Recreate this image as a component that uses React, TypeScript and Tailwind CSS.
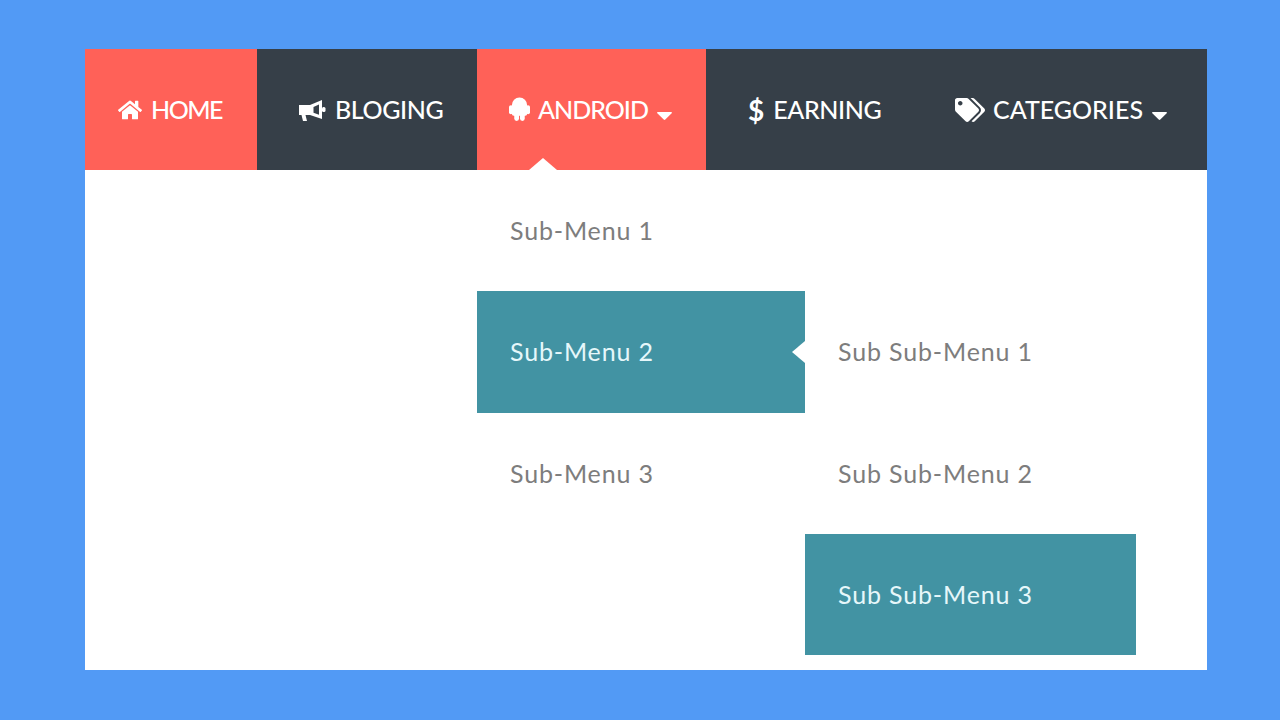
import { FaHome, FaTags } from 'react-icons/fa';

function AndroidIcon() {
  return (
    <svg viewBox="0 0 22 25" className="w-[21px] h-[25px] fill-white">
      <circle cx="11" cy="8" r="8" />
      <rect x="3" y="8" width="16" height="11" rx="2" />
      <rect x="0" y="8" width="4" height="9.5" rx="2" />
      <rect x="18" y="8" width="4" height="9.5" rx="2" />
      <rect x="5.5" y="16" width="5" height="8.5" rx="2.5" />
      <rect x="11.5" y="16" width="5" height="8.5" rx="2.5" />
    </svg>
  );
}

function HornIcon() {
  return (
    <svg viewBox="0 0 28 24" className="w-[28px] h-[24px]">
      <path d="M1 7h11v10H7.5l1.5 6H5L3.5 17H1z" fill="white" />
      <path d="M12 7 L24 2 V21 L12 17 Z" fill="white" />
      <path d="M15.5 9 L21 6.6 V16.8 L15.5 14.8 Z" fill="#363f48" />
      <rect x="24" y="9" width="3.5" height="5" rx="1.5" fill="white" />
    </svg>
  );
}

function Caret() {
  return (
    <svg viewBox="0 0 15 8" className="w-[15px] h-[8px] ml-[9px] mt-[12px] fill-white">
      <path d="M0.8 0h13.4c.7 0 1 .8.5 1.3L8.3 7.6c-.4.4-1.2.4-1.6 0L.3 1.3C-.2.8.1 0 .8 0z" />
    </svg>
  );
}

function NavItem({ width, active, pl, children }: { width: string; active?: boolean; pl: string; children: React.ReactNode }) {
  return (
    <a className={`flex items-center h-full ${width} ${pl} ${active ? 'bg-[#ff6158]' : ''} text-white text-[25px] font-medium`}>
      {children}
    </a>
  );
}

export default function App() {
  return (
    <div className="min-h-screen bg-[#529af5] pt-[49px] pl-[85px] font-['Lato',sans-serif]">
      <div className="w-[1122px] h-[621px] bg-white">
        {/* Main nav */}
        <nav className="flex h-[121px] bg-[#363f48]">
          <NavItem width="w-[172px]" pl="pl-[33px]" active>
            <FaHome className="w-[24px] h-[22px] mr-[9px]" />
            <span className="tracking-[-1.5px]">HOME</span>
          </NavItem>
          <NavItem width="w-[220px]" pl="pl-[41px]">
            <span className="mr-[9px]"><HornIcon /></span>
            <span className="tracking-[-0.4px]">BLOGING</span>
          </NavItem>
          <div className="relative h-full">
            <NavItem width="w-[229px]" pl="pl-[32px]" active>
              <AndroidIcon />
              <span className="ml-[8px] tracking-[-1px]">ANDROID</span>
              <Caret />
            </NavItem>
            <span className="absolute left-[52px] bottom-0 w-0 h-0 border-x-[14px] border-b-[12px] border-x-transparent border-b-white" />
          </div>
          <NavItem width="w-[212px]" pl="pl-[42px]">
            <span className="mr-[9px] font-bold text-[28px]">$</span>
            <span className="tracking-[-0.4px]">EARNING</span>
          </NavItem>
          <NavItem width="w-[289px]" pl="pl-[37px]">
            <FaTags className="w-[30px] h-[24px] mr-[8px]" />
            CATEGORIES
            <Caret />
          </NavItem>
        </nav>

        {/* Dropdowns */}
        <div className="flex pl-[392px] text-[25px] tracking-[0.85px]">
          <ul className="w-[328px]">
            <li className="h-[121px] flex items-center pl-[33px] text-[#7d7d7d]">Sub-Menu 1</li>
            <li className="relative h-[122px] flex items-center pl-[33px] bg-[#4293a3] text-[#e6f7fa]">
              Sub-Menu 2
              <span className="absolute right-0 top-1/2 -translate-y-1/2 w-0 h-0 border-y-[11px] border-r-[13px] border-y-transparent border-r-white" />
            </li>
            <li className="h-[121px] flex items-center pl-[33px] text-[#7d7d7d]">Sub-Menu 3</li>
          </ul>
          <ul className="w-[331px] mt-[121px]">
            <li className="h-[122px] flex items-center pl-[33px] text-[#7d7d7d]">Sub Sub-Menu 1</li>
            <li className="h-[121px] flex items-center pl-[33px] text-[#7d7d7d]">Sub Sub-Menu 2</li>
            <li className="h-[121px] flex items-center pl-[33px] bg-[#4293a3] text-[#e6f7fa]">Sub Sub-Menu 3</li>
          </ul>
        </div>
      </div>
    </div>
  );
}
